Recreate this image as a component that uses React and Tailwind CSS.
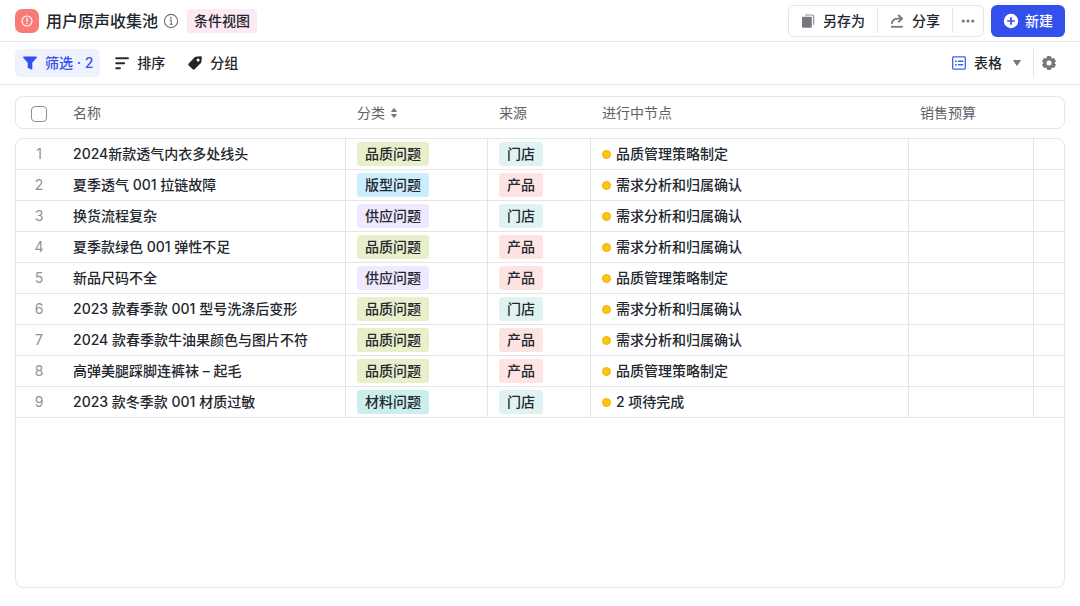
const rows = [
  ["2024新款透气内衣多处线头", "品质问题", "门店", "品质管理策略制定"],
  ["夏季透气 001 拉链故障", "版型问题", "产品", "需求分析和归属确认"],
  ["换货流程复杂", "供应问题", "门店", "需求分析和归属确认"],
  ["夏季款绿色 001 弹性不足", "品质问题", "产品", "需求分析和归属确认"],
  ["新品尺码不全", "供应问题", "产品", "品质管理策略制定"],
  ["2023 款春季款 001 型号洗涤后变形", "品质问题", "门店", "需求分析和归属确认"],
  ["2024 款春季款牛油果颜色与图片不符", "品质问题", "产品", "需求分析和归属确认"],
  ["高弹美腿踩脚连裤袜 – 起毛", "品质问题", "产品", "品质管理策略制定"],
  ["2023 款冬季款 001 材质过敏", "材料问题", "门店", "2 项待完成"],
];

const tagColors = {
  品质问题: "bg-[#e9efca]",
  版型问题: "bg-[#caeefc]",
  供应问题: "bg-[#efe8fe]",
  材料问题: "bg-[#caefec]",
  门店: "bg-[#e1f3f1]",
  产品: "bg-[#fde4e2]",
};

function Tag({ children }) {
  return (
    <span className={`block h-6 w-fit rounded-[3px] px-2 leading-6 ${tagColors[children]}`}>
      {children}
    </span>
  );
}

function Columns() {
  return (
    <colgroup>
      <col className="w-[46px]" />
      <col className="w-[284px]" />
      <col className="w-[142px]" />
      <col className="w-[103px]" />
      <col className="w-[318px]" />
      <col className="w-[125px]" />
      <col />
    </colgroup>
  );
}

function AlertLogo() {
  return (
    <span className="flex size-6 items-center justify-center rounded-[7px] bg-[#f87b77]">
      <svg viewBox="0 0 12 12" className="size-3" fill="none" stroke="#fff" strokeWidth="1.1" strokeLinecap="round">
        <circle cx="6" cy="6" r="5" />
        <path d="M6 3.2v3.2M6 8.5v.1" strokeWidth="1.3" />
      </svg>
    </span>
  );
}

function InfoIcon() {
  return (
    <svg viewBox="0 0 16 16" className="size-4" fill="none" stroke="#6e7277" strokeWidth="1.1">
      <circle cx="8" cy="8" r="6.6" />
      <path d="M6.6 7h1.6v4M6.3 11.2h3.6" />
      <circle cx="7.9" cy="4.7" r=".9" fill="#6e7277" stroke="none" />
    </svg>
  );
}

function CopyIcon() {
  return (
    <svg viewBox="0 0 14 14" className="size-3.5" fill="none">
      <path d="M4 1h7.6a1 1 0 0 1 1 1v8.8" stroke="#8f9296" strokeWidth="1.2" />
      <rect x="1" y="2.7" width="9.8" height="11" rx="1" fill="#74787d" />
    </svg>
  );
}

function ShareIcon() {
  return (
    <svg viewBox="0 0 14 14" className="size-3.5" fill="none" stroke="#74787d" strokeWidth="1.8">
      <path d="M8.2 1l3.9 3.7-3.9 3.7" strokeLinejoin="round" />
      <path d="M12 4.7H8C4.6 4.7 2.2 6.500 1.700 9.800" />
      <path d="M1 12.800h11.800" />
    </svg>
  );
}

function MoreIcon() {
  return (
    <svg viewBox="0 0 14 4" className="h-1 w-3.5" fill="#74787d">
      <circle cx="2.2" cy="2" r="1.6" />
      <circle cx="7" cy="2" r="1.6" />
      <circle cx="11.8" cy="2" r="1.6" />
    </svg>
  );
}

function PlusIcon() {
  return (
    <svg viewBox="0 0 16 16" className="size-4">
      <circle cx="8" cy="8" r="7.2" fill="#fff" />
      <path d="M8 4.2v7.6M4.2 8h7.6" stroke="#3350ed" strokeWidth="1.7" />
    </svg>
  );
}

function FilterIcon() {
  return (
    <svg viewBox="0 0 14 14" className="size-3.5" fill="#3350ed">
      <path d="M.9.6h12.2c.7 0 1 .7.6 1.200L9.300 6.700v6.200c0 .500-.400.700-.800.500L5.200 12a.700.700 0 0 1-.500-.600V6.700L.300 1.800C-.100 1.300.200.600.900.600z" />
    </svg>
  );
}

function SortIcon() {
  return (
    <svg viewBox="0 0 14 14" className="size-3.5" fill="none" stroke="#262a30" strokeWidth="1.900" strokeLinecap="round">
      <path d="M1.200 2.300h11.800M1.200 7.300h8M1.200 12.200h3.800" />
    </svg>
  );
}

function TagIcon() {
  return (
    <svg viewBox="0 0 14 14" className="size-3.5">
      <path
        fillRule="evenodd"
        fill="#20242a"
        d="M7.7.7 12.300.200c1-.100 1.600.500 1.500 1.500l-.400 4.200c0 .400-.200.700-.500 1l-6.300 6.400c-.600.600-1.300.600-1.900 0L.700 9.400c-.600-.600-.600-1.300 0-1.900L6.700 1.200c.300-.300.600-.500 1-.500zM10.100 2.500a1.500 1.500 0 1 0 0 3 1.500 1.500 0 0 0 0-3z"
      />
    </svg>
  );
}

function TableIcon() {
  return (
    <svg viewBox="0 0 14 14" className="size-3.5" fill="none" stroke="#3f63f3" strokeWidth="1.3">
      <rect x=".7" y=".9" width="12.6" height="12.2" rx=".8" />
      <path d="M3 5.200h1.800M6 5.200h5.200M3 8.800h1.800M6 8.800h5.200" strokeWidth="1.500" />
    </svg>
  );
}

function GearIcon() {
  return (
    <svg viewBox="0 0 14 14" className="size-3.5">
      <path
        fill="#74787d"
        stroke="#74787d"
        strokeWidth="1"
        strokeLinejoin="round"
        d="M5.400.600h3.200l.500 1.600 1.200.700 1.700-.300 1.500 2.700L12.500 6.500v1l1 1.200-1.500 2.700-1.700-.300-1.200.700-.500 1.600H5.400l-.500-1.600-1.200-.700-1.700.300L.500 8.700l1-1.200v-1L.500 5.300 2 2.600l1.700.300 1.200-.700z"
      />
      <circle cx="7" cy="7" r="2.500" fill="#fff" />
    </svg>
  );
}

function SortArrows() {
  return (
    <svg viewBox="0 0 8 12" className="h-3 w-2" fill="#74787d">
      <path d="M4 .8 7.200 5H.800zM4 11.200.800 7h6.400z" />
    </svg>
  );
}

function Divider({ className }) {
  return <span className={`w-px bg-[#e3e5e8] ${className}`} />;
}

export default function App() {
  return (
    <div className="flex min-h-screen flex-col bg-white font-['Inter','Noto_Sans_CJK_SC',sans-serif] text-sm font-medium text-[#23272e]">
      <header className="flex h-[42px] items-center border-b border-[#e6e7e9] px-[15px]">
        <AlertLogo />
        <h1 className="ml-[7px] text-base leading-6 font-medium">用户原声收集池</h1>
        <button type="button" aria-label="说明" className="ml-[5px]">
          <InfoIcon />
        </button>
        <span className="ml-2 h-6 rounded-[3px] bg-[#fde9f4] px-[7px] leading-6">条件视图</span>
        <div className="ml-auto flex h-8 items-center rounded-md border border-[#e3e5e8]">
          <button type="button" className="flex h-full items-center gap-2 px-3">
            <CopyIcon />
            另存为
          </button>
          <Divider className="h-6" />
          <button type="button" className="flex h-full items-center gap-2 px-3">
            <ShareIcon />
            分享
          </button>
          <Divider className="h-6" />
          <button type="button" aria-label="更多" className="flex h-full items-center px-2">
            <MoreIcon />
          </button>
        </div>
        <button type="button" className="ml-[7px] flex h-8 items-center gap-1.5 rounded-md bg-[#3350ed] px-3 text-white">
          <PlusIcon />
          新建
        </button>
      </header>

      <div className="flex h-[43px] items-center border-b border-[#e6e7e9] px-[15px]">
        <button type="button" className="flex h-7 items-center gap-2 rounded-[5px] bg-[#edf2fe] pr-[7px] pl-2 text-[#3350ed]">
          <FilterIcon />
          筛选 · 2
        </button>
        <button type="button" className="flex h-7 items-center gap-2 pl-[15px]">
          <SortIcon />
          排序
        </button>
        <button type="button" className="flex h-7 items-center gap-2 pl-[23px]">
          <TagIcon />
          分组
        </button>
        <label className="relative ml-auto flex h-7 items-center gap-2">
          <TableIcon />
          <select aria-label="视图类型" className="appearance-none bg-transparent pr-[31px] font-medium">
            <option>表格</option>
          </select>
          <svg viewBox="0 0 8 6" className="pointer-events-none absolute right-3 h-1.5 w-2" fill="#74787d">
            <path d="M.6 0h6.800a.400.400 0 0 1 .300.700L4.400 5.600a.500.500 0 0 1-.800 0L.300.700A.400.400 0 0 1 .600 0z" />
          </svg>
        </label>
        <Divider className="h-7" />
        <button type="button" aria-label="设置" className="pr-[9px] pl-2">
          <GearIcon />
        </button>
      </div>

      <main className="flex flex-1 flex-col gap-[9px] px-[15px] pt-[11px] pb-[18px]">
        <div className="rounded-lg border border-[#e3e5e8]">
          <table className="w-full table-fixed text-left text-[#5d6268]">
            <Columns />
            <thead>
              <tr className="h-[31px]">
                <th className="text-center">
                  <input
                    type="checkbox"
                    aria-label="全选"
                    className="inline-block size-4 appearance-none rounded-[4px] border border-[#8a8f96] align-middle"
                  />
                </th>
                <th className="px-[11px] font-normal">名称</th>
                <th className="px-[11px] font-normal">
                  <button type="button" className="flex items-center gap-[5px]">
                    分类
                    <SortArrows />
                  </button>
                </th>
                <th className="px-[11px] font-normal">来源</th>
                <th className="px-[11px] font-normal">进行中节点</th>
                <th className="px-[11px] font-normal">销售预算</th>
                <td />
              </tr>
            </thead>
          </table>
        </div>

        <div className="flex-1 overflow-hidden rounded-lg border border-[#e3e5e8]">
          <table className="w-full table-fixed border-separate border-spacing-0 text-left">
            <Columns />
            <tbody className="[&_td]:border-b [&_td]:border-[#e3e5e8]">
              {rows.map(([name, category, source, node], i) => (
                <tr key={name} className="h-[31px]">
                  <td className="text-center font-normal text-[#8d9299]">{i + 1}</td>
                  <td className="truncate border-r px-[11px]">{name}</td>
                  <td className="border-r px-[11px]">
                    <Tag>{category}</Tag>
                  </td>
                  <td className="border-r px-[11px]">
                    <Tag>{source}</Tag>
                  </td>
                  <td className="border-r px-[11px]">
                    <span className="flex items-center gap-[5px]">
                      <span className="size-[9px] rounded-full border border-[#e8b10c] bg-[#fec60a]" />
                      {node}
                    </span>
                  </td>
                  <td className="border-r" />
                  <td />
                </tr>
              ))}
            </tbody>
          </table>
        </div>
      </main>
    </div>
  );
}
